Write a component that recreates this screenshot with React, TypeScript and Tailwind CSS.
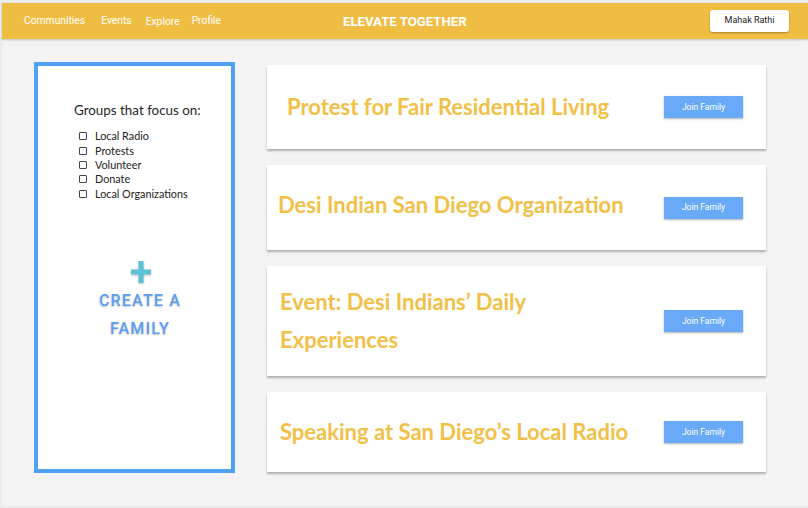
import React from "react";

const filters = ["Local Radio", "Protests", "Volunteer", "Donate", "Local Organizations"];

const families = [
  { title: "Protest for Fair Residential Living", card: "h-[84px] pl-[20px]", text: "block leading-tight mb-[1px]" },
  { title: "Desi Indian San Diego Organization", card: "h-[85px] pl-[11px]", text: "block leading-tight mb-[5px]" },
  { title: "Event: Desi Indians’ Daily Experiences", card: "h-[110px] pl-[13px]", text: "block max-w-[280px] leading-[38px]" },
  { title: "Speaking at San Diego’s Local Radio", card: "h-[80px] pl-[13px]", text: "block leading-tight" },
];

const App: React.FC = () => {
  return (
    <div className="w-[808px] h-[508px] overflow-hidden bg-[#ebebeb] pt-[3px] pl-[2px] pb-[2px]">
      <div className="h-full flex flex-col bg-[#f3f3f3]">
        {/* top bar */}
        <header className="relative h-[36px] shrink-0 flex items-center bg-[#f0bd43] shadow-[0_1px_2px_rgba(0,0,0,0.2)] font-['Roboto',sans-serif]">
          <nav className="flex items-center pl-[22px] text-[10.3px] text-white">
            <span>Communities</span>
            <span className="ml-[16px]">Events</span>
            <span className="ml-[14px] mt-[2px]">Explore</span>
            <span className="ml-[12px]">Profile</span>
          </nav>
          <div className="absolute left-[341px] top-[12px] text-[13.2px] font-bold text-white leading-none">
            ELEVATE TOGETHER
          </div>
          <button className="ml-auto mr-[19px] w-[79px] h-[22px] rounded-[3px] bg-white text-[9px] text-[#222] shadow-[0_1px_2px_rgba(0,0,0,0.3)]">
            Mahak Rathi
          </button>
        </header>

        <main className="flex items-start pl-[32px] pt-[23px]">
          {/* filter panel */}
          <aside className="w-[201px] h-[411px] shrink-0 border-4 border-[#4fa1f6] bg-white flex flex-col font-['Lato',sans-serif]">
            <h2 className="mt-[34px] ml-[36px] text-[13.4px] text-[#1f1f1f]">Groups that focus on:</h2>
            <ul className="mt-[9px] ml-[41px] flex flex-col">
              {filters.map((f) => (
                <li key={f} className="flex items-center h-[14.4px] text-[10.8px] text-[#222]">
                  <span className="w-[8px] h-[8px] border border-[#444] rounded-[1px] bg-white" />
                  <span className="ml-[8px]">{f}</span>
                </li>
              ))}
            </ul>
            <div className="mt-[60px] ml-[11px] flex flex-col items-center font-['Roboto',sans-serif]">
              <svg width="20" height="22" viewBox="0 0 20 22" className="drop-shadow-[0_1px_1px_rgba(0,0,0,0.25)] ml-[1px]">
                <rect x="7.5" y="0" width="5" height="22" fill="#5cc0d6" />
                <rect x="0" y="8.5" width="20" height="5" fill="#5cc0d6" />
              </svg>
              <div className="mt-[4px] text-center text-[16px] font-medium leading-[28px] tracking-[1.2px] text-[#5d9df2] [text-shadow:0_1px_2px_rgba(0,0,0,0.25)]">
                CREATE A<br />FAMILY
              </div>
            </div>
          </aside>

          {/* family list */}
          <section className="ml-[32px] w-[499px] flex flex-col gap-[16px] mt-[3px]">
            {families.map((f) => (
              <div
                key={f.title}
                className={`${f.card} bg-white flex items-center pr-[23px] shadow-[0_1.5px_2px_rgba(0,0,0,0.28)]`}
              >
                <h3 className="flex-1 font-['Lato',sans-serif] font-bold text-[22px] text-[#f2bf47]">
                  <span className={f.text}>{f.title}</span>
                </h3>
                <button className="w-[79px] h-[22px] shrink-0 bg-[#68aaf7] text-white text-[8.5px] font-['Roboto',sans-serif] shadow-[0_1px_2px_rgba(0,0,0,0.3)]">
                  Join Family
                </button>
              </div>
            ))}
          </section>
        </main>
      </div>
    </div>
  );
};

export default App;
